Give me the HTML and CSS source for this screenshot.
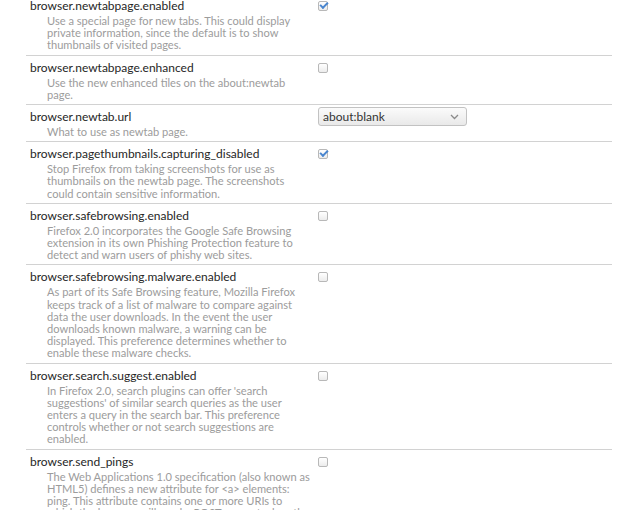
FILE: index.html
```html
<!DOCTYPE html>
<html>
<head>
  <meta charset="utf-8">
  <title>about:config</title>
  <link rel="stylesheet" href="styles.css">
</head>
<body>
  <div class="prefs">
    <div class="pref">
      <div class="pref-info">
        <div class="pref-name">browser.newtabpage.enabled</div>
        <div class="pref-desc">Use a special page for new tabs. This could display<br>private information, since the default is to show<br>thumbnails of visited pages.</div>
      </div>
      <div class="pref-value"><span class="check on"></span></div>
    </div>
    <div class="pref">
      <div class="pref-info">
        <div class="pref-name">browser.newtabpage.enhanced</div>
        <div class="pref-desc">Use the new enhanced tiles on the about:newtab<br>page.</div>
      </div>
      <div class="pref-value"><span class="check"></span></div>
    </div>
    <div class="pref">
      <div class="pref-info">
        <div class="pref-name">browser.newtab.url</div>
        <div class="pref-desc">What to use as newtab page.</div>
      </div>
      <div class="pref-value">
        <div class="select">
          <span>about:blank</span>
          <svg width="9" height="6" viewBox="0 0 9 6"><path d="M1 1 L4.5 4.5 L8 1" fill="none" stroke="#8a8a8a" stroke-width="1.3"/></svg>
        </div>
      </div>
    </div>
    <div class="pref">
      <div class="pref-info">
        <div class="pref-name">browser.pagethumbnails.capturing_disabled</div>
        <div class="pref-desc">Stop Firefox from taking screenshots for use as<br>thumbnails on the newtab page. The screenshots<br>could contain sensitive information.</div>
      </div>
      <div class="pref-value"><span class="check on"></span></div>
    </div>
    <div class="pref">
      <div class="pref-info">
        <div class="pref-name">browser.safebrowsing.enabled</div>
        <div class="pref-desc">Firefox 2.0 incorporates the Google Safe Browsing<br>extension in its own Phishing Protection feature to<br>detect and warn users of phishy web sites.</div>
      </div>
      <div class="pref-value"><span class="check"></span></div>
    </div>
    <div class="pref">
      <div class="pref-info">
        <div class="pref-name">browser.safebrowsing.malware.enabled</div>
        <div class="pref-desc">As part of its Safe Browsing feature, Mozilla Firefox<br>keeps track of a list of malware to compare against<br>data the user downloads. In the event the user<br>downloads known malware, a warning can be<br>displayed. This preference determines whether to<br>enable these malware checks.</div>
      </div>
      <div class="pref-value"><span class="check"></span></div>
    </div>
    <div class="pref">
      <div class="pref-info">
        <div class="pref-name">browser.search.suggest.enabled</div>
        <div class="pref-desc">In Firefox 2.0, search plugins can offer 'search<br>suggestions' of similar search queries as the user<br>enters a query in the search bar. This preference<br>controls whether or not search suggestions are<br>enabled.</div>
      </div>
      <div class="pref-value"><span class="check"></span></div>
    </div>
    <div class="pref">
      <div class="pref-info">
        <div class="pref-name">browser.send_pings</div>
        <div class="pref-desc">The Web Applications 1.0 specification (also known as<br>HTML5) defines a new attribute for &lt;a&gt; elements:<br>ping. This attribute contains one or more URIs to<br>which the browser will send a POST request when the<br>user follows the link.</div>
      </div>
      <div class="pref-value"><span class="check"></span></div>
    </div>
  </div>
</body>
</html>
```

FILE: styles.css
```css
body {
  margin: 0;
  background: #fff;
  font-family: Lato, 'Open Sans', sans-serif;
  overflow: hidden;
}
.prefs {
  margin: -7px 18px 0 26px;
}
.pref {
  display: grid;
  grid-template-columns: 288px 1fr;
  padding: 4px 0 3px 4px;
  border-top: 1px solid #d2d2d2;
}
.pref-name {
  font-size: 12px;
  line-height: 16px;
  color: #262626;
  white-space: nowrap;
}
.pref-desc {
  margin: 1px 0 0 17px;
  font-size: 11.1px;
  line-height: 12.2px;
  color: #9c9c9c;
  white-space: nowrap;
}
.check {
  display: block;
  position: relative;
  width: 8px;
  height: 8px;
  margin-top: 3px;
  border: 1px solid #b8b8b8;
  border-radius: 2px;
  background: linear-gradient(#fff, #ececec);
}
.check.on::after {
  content: "";
  position: absolute;
  left: 1px;
  top: 0;
  width: 6px;
  height: 3px;
  border-left: 2px solid #4a86cf;
  border-bottom: 2px solid #4a86cf;
  transform: rotate(-45deg);
}
.select {
  display: flex;
  align-items: center;
  justify-content: space-between;
  box-sizing: border-box;
  width: 149px;
  height: 19px;
  margin-top: -2px;
  padding: 0 7px 0 4px;
  border: 1px solid #c2c2c2;
  border-radius: 3px;
  background: linear-gradient(#fbfbfb, #e9e9e9);
  font-size: 12px;
  color: #333;
}
```
